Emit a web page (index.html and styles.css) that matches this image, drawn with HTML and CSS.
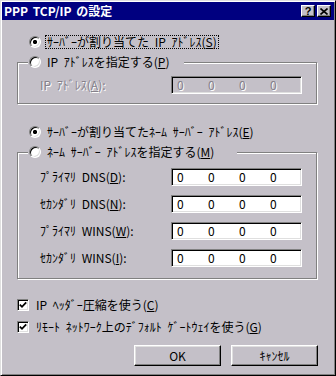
FILE: index.html
```html
<!DOCTYPE html>
<html lang="ja">
<head>
    <meta charset="UTF-8">
    <title>PPP TCP/IP の設定</title>
    <link rel="stylesheet" href="styles.css">
</head>
<body>
    <div class="dialog">
        <div class="titlebar">
            <span class="title">PPP TCP/IP の設定</span>
            <span class="caption-btns">
                <span class="cap-btn help">?</span>
                <span class="cap-btn">
                    <svg width="8" height="7" viewBox="0 0 8 7"><path d="M0.5 0.5 L7.5 6.5 M7.5 0.5 L0.5 6.5" stroke="#000" stroke-width="1.6"/></svg>
                </span>
            </span>
        </div>
        <div class="content">
            <div class="option top-option">
                <span class="radio checked"></span>
                <span class="label focus">ｻｰﾊﾞｰが割り当てた IP ｱﾄﾞﾚｽ(<u>S</u>)</span>
            </div>

            <fieldset class="group">
                <legend class="legend-ip">
                    <div class="option">
                        <span class="radio"></span>
                        <span class="label">IP ｱﾄﾞﾚｽを指定する(<u>P</u>)</span>
                    </div>
                </legend>
                <div class="group-body ip-body">
                    <div class="field-row">
                        <span class="field-label disabled">IP ｱﾄﾞﾚｽ(<u>A</u>):</span>
                        <span class="ip-box disabled"><span>0</span><span>0</span><span>0</span><span>0</span></span>
                    </div>
                </div>
            </fieldset>

            <div class="option top-option dns-option">
                <span class="radio checked"></span>
                <span class="label">ｻｰﾊﾞｰが割り当てたﾈｰﾑ ｻｰﾊﾞｰ ｱﾄﾞﾚｽ(<u>E</u>)</span>
            </div>

            <fieldset class="group">
                <legend class="legend-dns">
                    <div class="option">
                        <span class="radio"></span>
                        <span class="label">ﾈｰﾑ ｻｰﾊﾞｰ ｱﾄﾞﾚｽを指定する(<u>M</u>)</span>
                    </div>
                </legend>
                <div class="group-body dns-body">
                    <div class="field-row">
                        <span class="field-label">ﾌﾟﾗｲﾏﾘ DNS(<u>D</u>):</span>
                        <span class="ip-box"><span>0</span><span>0</span><span>0</span><span>0</span></span>
                    </div>
                    <div class="field-row">
                        <span class="field-label">ｾｶﾝﾀﾞﾘ DNS(<u>N</u>):</span>
                        <span class="ip-box"><span>0</span><span>0</span><span>0</span><span>0</span></span>
                    </div>
                    <div class="field-row">
                        <span class="field-label">ﾌﾟﾗｲﾏﾘ WINS(<u>W</u>):</span>
                        <span class="ip-box"><span>0</span><span>0</span><span>0</span><span>0</span></span>
                    </div>
                    <div class="field-row">
                        <span class="field-label">ｾｶﾝﾀﾞﾘ WINS(<u>I</u>):</span>
                        <span class="ip-box"><span>0</span><span>0</span><span>0</span><span>0</span></span>
                    </div>
                </div>
            </fieldset>

            <div class="check-row first-check">
                <span class="check"><svg width="8" height="8" viewBox="0 0 8 8"><polyline points="0.8,3.6 3,5.8 7.2,1.4" fill="none" stroke="#000" stroke-width="1.8"/></svg></span>
                <span class="check-label">IP ﾍｯﾀﾞｰ圧縮を使う(<u>C</u>)</span>
            </div>
            <div class="check-row">
                <span class="check"><svg width="8" height="8" viewBox="0 0 8 8"><polyline points="0.8,3.6 3,5.8 7.2,1.4" fill="none" stroke="#000" stroke-width="1.8"/></svg></span>
                <span class="check-label">ﾘﾓｰﾄ ﾈｯﾄﾜｰｸ上のﾃﾞﾌｫﾙﾄ ｹﾞｰﾄｳｪｲを使う(<u>G</u>)</span>
            </div>

            <div class="btn-row">
                <button class="btn">OK</button>
                <button class="btn">ｷｬﾝｾﾙ</button>
            </div>
        </div>
    </div>
</body>
</html>
```
FILE: styles.css
```css
body {
    margin: 0;
    background: #fff;
    font-family: "Noto Sans CJK JP", sans-serif;
    font-size: 12px;
    line-height: 14px;
    color: #000;
}
.dialog {
    width: 336px;
    height: 376px;
    box-sizing: border-box;
    padding: 1px;
    background: #c4c0c8;
    border: 1px solid;
    border-color: #dfdfdf #000 #000 #dfdfdf;
    box-shadow: inset 1px 1px #fff, inset -1px -1px #808080;
}
.titlebar {
    height: 18px;
    background: #000080;
    color: #fff;
    display: flex;
    align-items: center;
    justify-content: space-between;
    padding: 0 3px 0 2px;
}
.title {
    font-weight: bold;
    word-spacing: 2px;
}
.caption-btns {
    display: flex;
    gap: 2px;
}
.cap-btn {
    width: 14px;
    height: 12px;
    box-sizing: border-box;
    background: #c4c0c8;
    border: 1px solid;
    border-color: #fff #000 #000 #fff;
    box-shadow: inset -1px -1px #808080;
    display: flex;
    align-items: center;
    justify-content: center;
    color: #000;
    font-family: "Liberation Sans", sans-serif;
    font-weight: bold;
    font-size: 11px;
}
.content {
    padding: 15px 16px 0 15px;
}
.option {
    display: flex;
    align-items: center;
    height: 14px;
}
.top-option {
    padding-left: 12px;
}
.dns-option {
    margin-top: 21px;
}
.radio {
    width: 12px;
    height: 12px;
    box-sizing: border-box;
    border-radius: 50%;
    background: #fff;
    border: 1px solid;
    border-color: #808080 #fff #fff #808080;
    box-shadow: inset 1px 1px #000, inset -1px -1px #dfdfdf;
    margin-right: 4px;
    flex: none;
}
.radio.checked {
    background: radial-gradient(circle, #000 1.8px, #fff 2.4px);
}
.label {
    height: 14px;
    box-sizing: border-box;
    border: 1px solid transparent;
    padding: 0 1px;
    line-height: 12px;
    word-spacing: 3px;
    white-space: nowrap;
}
.label.focus {
    border: 1px dotted #000;
}
.group {
    width: 300px;
    box-sizing: border-box;
    margin: 6px 0 0;
    padding: 0;
    min-inline-size: auto;
    border: 1px solid #808080;
    box-shadow: 1px 1px #fff, inset 1px 1px #fff;
}
.group legend {
    margin-left: 10px;
    padding: 0 0 0 1px;
    height: 14px;
    background: #c4c0c8;
    box-sizing: border-box;
}
.legend-ip {
    width: 156px;
}
.legend-dns {
    width: 209px;
}
.group-body {
    padding-left: 22px;
}
.ip-body {
    padding-top: 7px;
    padding-bottom: 9px;
}
.dns-body {
    padding-top: 9px;
    padding-bottom: 11px;
    display: flex;
    flex-direction: column;
    gap: 9px;
}
.field-row {
    display: grid;
    grid-template-columns: 131px 131px;
    align-items: center;
    height: 18px;
}
.field-label {
    word-spacing: 3px;
    white-space: nowrap;
}
.disabled {
    color: #85818a;
    text-shadow: 1px 1px #fff;
}
.ip-box {
    height: 18px;
    box-sizing: border-box;
    background: #fff;
    border: 1px solid;
    border-color: #808080 #fff #fff #808080;
    box-shadow: inset 1px 1px #000, inset -1px -1px #dfdfdf;
    display: flex;
    align-items: center;
    padding-left: 5px;
}
.ip-box span {
    width: 32px;
}
.ip-box.disabled {
    background: #c4c0c8;
}
.check-row {
    display: flex;
    align-items: center;
    height: 14px;
    margin-top: 8px;
}
.first-check {
    margin-top: 19px;
}
.check {
    width: 12px;
    height: 12px;
    box-sizing: border-box;
    background: #fff;
    border: 1px solid;
    border-color: #808080 #fff #fff #808080;
    box-shadow: inset 1px 1px #000, inset -1px -1px #dfdfdf;
    display: flex;
    align-items: center;
    justify-content: center;
    margin-right: 7px;
    flex: none;
}
.check-label {
    word-spacing: 3px;
    white-space: nowrap;
}
.btn-row {
    display: flex;
    justify-content: flex-end;
    gap: 10px;
    margin-top: 11px;
}
.btn {
    width: 87px;
    height: 21px;
    box-sizing: border-box;
    padding: 0;
    background: #c4c0c8;
    border: 1px solid;
    border-color: #fff #000 #000 #fff;
    box-shadow: inset -1px -1px #808080, inset 1px 1px #dfdfdf;
    font: inherit;
    color: #000;
}
```
